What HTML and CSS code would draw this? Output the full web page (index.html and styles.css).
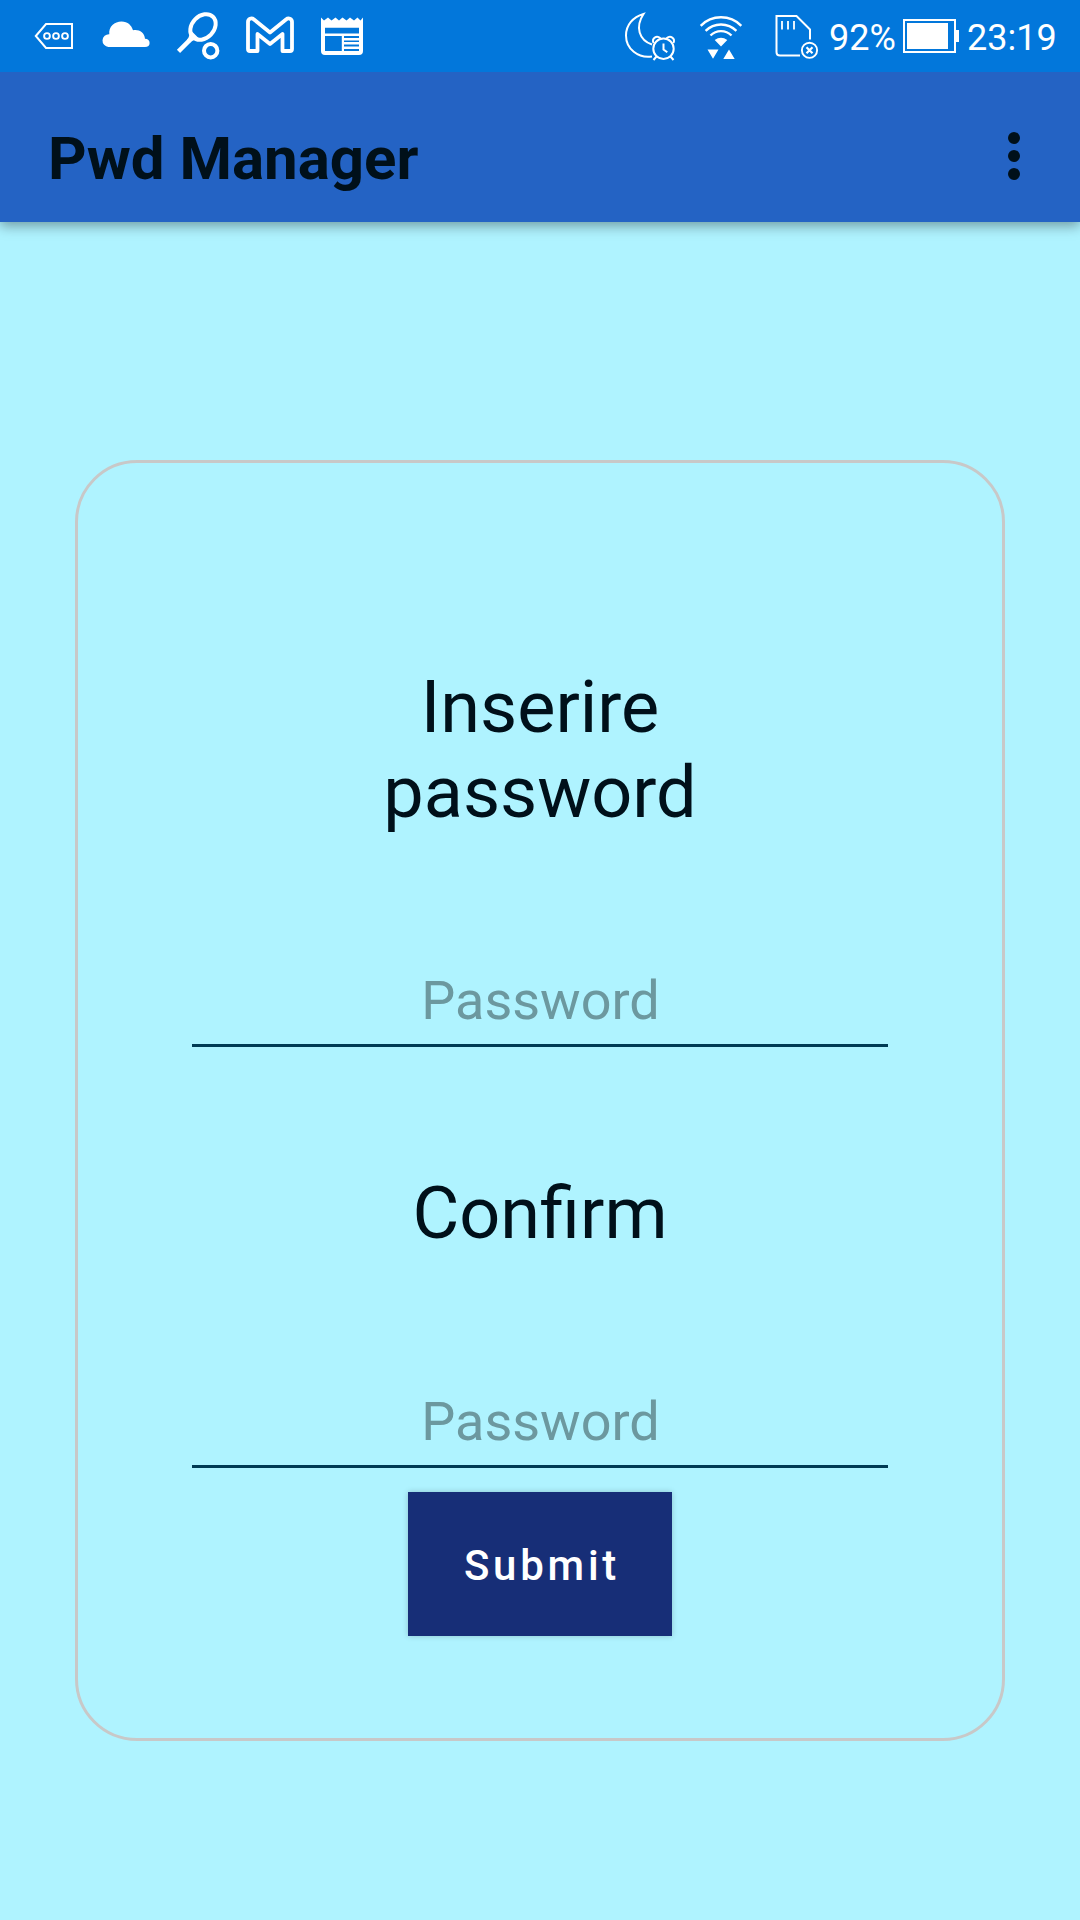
FILE: index.html
```html
<!DOCTYPE html>
<html lang="it">
<head>
<meta charset="utf-8">
<title>Pwd Manager</title>
<link rel="stylesheet" href="styles.css">
</head>
<body>
<div class="screen">
  <div class="status-bar">
    <div class="status-group">
      <svg class="status-icon" width="90" height="72" viewBox="0 0 90 72">
        <path d="M35.8 36 46 24H72V48H46Z" stroke-width="2"/>
        <g stroke-width="1.9"><circle cx="47" cy="36" r="2.9"/><circle cx="56" cy="36" r="2.9"/><circle cx="65" cy="36" r="2.9"/></g>
      </svg>
      <svg class="status-icon" width="70" height="72" viewBox="90 0 70 72">
        <path class="solid" d="M108.500 47A6.300 6.300 0 0 1 109.300 34.200C108.500 26.500 114.500 21.500 121.500 21.500C128 21.500 131.500 25.500 133 30.200C139 29 144.500 32.500 145 38.700C148 38.700 149.600 40.500 149.600 43S148 47 145 47Z"/>
      </svg>
      <svg class="status-icon" width="75" height="72" viewBox="160 0 75 72">
        <ellipse cx="203" cy="27" rx="14.300" ry="11" transform="rotate(-46 203 27)" stroke-width="4"/>
        <path d="M178.500 51.300 190 39.800" stroke-width="4.500"/>
        <path class="solid" d="M187 39.500Q190.500 36 189.500 29L200 39.500Q193.500 39 190.300 42.500Z"/>
        <circle cx="210.700" cy="50.700" r="6.700" stroke-width="4"/>
      </svg>
      <svg class="status-icon" width="70" height="72" viewBox="235 0 70 72">
        <path d="M248 22V49Q248 51 250 51H257.500V34L270 44 282.500 34V51H290Q292 51 292 49V22C292 18.500 288.500 17.500 286 19.500L270 32.500 254 19.500C251.500 17.500 248 18.500 248 22Z" stroke-width="3.800" stroke-linejoin="round"/>
      </svg>
      <svg class="status-icon" width="75" height="72" viewBox="305 0 75 72">
        <path class="solid" fill-rule="evenodd" d="M321 17.500 324 20.500 328 17.500 331.500 20.500 335.500 17.500 339 20.500 342.500 17.500 346.500 20.500 350 17.500 354 20.500 357.500 17.500 360.500 20.500 363 17.500V51Q363 55 359 55H325Q321 55 321 51ZM325 27.700V33.500H359V27.700ZM325 36V51H341.800V36ZM344 36V38H359V36ZM344 40.500V42H359V40.500ZM344 44.500V46.500H359V44.500ZM344 49V51H359V49Z"/>
      </svg>
    </div>
    <div class="status-group">
      <svg class="status-icon" width="75" height="72" viewBox="610 0 75 72">
        <path d="M652 56.500C638 58.500 626 49 626 35.500C626 25 633 17 643.500 14C635 27 639 40 652 44.500" stroke-width="2"/>
        <circle cx="663.500" cy="48.700" r="10.200" stroke-width="2"/>
        <path d="M653.500 43C651.500 38 656.500 35 660.500 38.300M673.500 43C675.500 38 670.500 35 666.500 38.300M656.500 56.500 653.500 60M670.500 56.500 673.500 60M663.500 43.500V49.500L667.300 52.300" stroke-width="2"/>
      </svg>
      <svg class="status-icon" width="75" height="72" viewBox="685 0 75 72">
        <path d="M700.700 25.800A28.500 28.500 0 0 1 741.300 25.800M705.600 30.800A21.800 21.800 0 0 1 736.400 30.800M710.500 35.500A14.800 14.800 0 0 1 731.500 35.500" stroke-width="2.400"/>
        <path class="solid" d="M714.700 40Q721 35.500 727.300 40L721 46.500ZM707.500 49.500H718.500L713 58.800ZM729 49.500 734.700 59H723.300Z"/>
      </svg>
      <svg class="status-icon" width="69" height="72" viewBox="760 0 69 72">
        <path d="M800 55.500H780Q776.500 55.500 776.500 52V16H796.500L810 29.500V39.500" stroke-width="2"/>
        <path d="M782 21V29.500M788 21V29.500M794 21V29.500" stroke-width="1.800"/>
        <circle cx="809.500" cy="50.300" r="7.600" stroke-width="1.900"/>
        <path d="M806.500 47.300 812.500 53.300M812.500 47.300 806.500 53.300" stroke-width="2.200"/>
      </svg>
      <span class="battery-level">92%</span>
      <svg class="status-icon" width="60" height="72" viewBox="901 0 60 72">
        <rect x="904" y="20" width="51" height="32" stroke-width="2"/>
        <path class="solid" d="M907 23H948V49H907ZM956 30H959V42H956Z"/>
      </svg>
      <span class="clock">23:19</span>
    </div>
  </div>
  <header class="app-bar">
    <h1 class="app-title">Pwd Manager</h1>
    <button class="menu-button" type="button" aria-label="Menu">
      <span class="dot"></span><span class="dot"></span><span class="dot"></span>
    </button>
  </header>
  <main class="content">
    <form class="card">
      <h2 class="label">Inserire<br>password</h2>
      <input class="field" type="password" placeholder="Password">
      <h2 class="label label-confirm">Confirm</h2>
      <input class="field" type="password" placeholder="Password">
      <button class="submit" type="button">Submit</button>
    </form>
  </main>
</div>
</body>
</html>
```

FILE: styles.css
```css
* {
  box-sizing: border-box;
}

body {
  margin: 0;
  font-family: Roboto, "Liberation Sans", sans-serif;
  color: #00101a;
}

.screen {
  display: flex;
  flex-direction: column;
  width: 1080px;
  height: 1920px;
  overflow: hidden;
  background: #aff3ff;
}

.status-bar {
  position: relative;
  z-index: 1;
  display: flex;
  justify-content: space-between;
  height: 72px;
  padding-right: 24px;
  background: #0277db;
  color: #fff;
  font-size: 36px;
  line-height: 76px;
}

.status-group {
  display: flex;
}

.status-icon {
  display: block;
  flex: none;
  fill: none;
  stroke: #fff;
}

.status-icon .solid {
  fill: #fff;
  stroke: none;
}

.battery-level {
  width: 72px;
}

.clock {
  width: 95px;
  padding-left: 6px;
}

.app-bar {
  display: flex;
  align-items: center;
  justify-content: space-between;
  height: 150px;
  padding: 18px 54px 0 48px;
  background: #2463c4;
  box-shadow: 0 4px 12px rgba(0, 0, 0, 0.36);
}

.app-title {
  margin: 0;
  padding-top: 5px;
  font-size: 60px;
  font-weight: 700;
  line-height: 70px;
}

.menu-button {
  display: flex;
  flex-direction: column;
  align-items: center;
  gap: 6px;
  width: 24px;
  padding: 0;
  border: 0;
  background: none;
}

.dot {
  width: 12px;
  height: 12px;
  border-radius: 50%;
  background: #00101a;
}

.content {
  padding: 238px 75px 0;
}

.card {
  display: flex;
  flex-direction: column;
  align-items: center;
  height: 1281px;
  padding-top: 202px;
  border: 3px solid #c8c8c8;
  border-radius: 62px;
}

.label {
  margin: 0;
  font-size: 72px;
  font-weight: 400;
  line-height: 85px;
  text-align: center;
}

.label-confirm {
  margin-top: 124px;
}

.field {
  width: 696px;
  height: 78px;
  margin-top: 134px;
  padding: 0 0 12px 1px;
  border: 0;
  border-bottom: 3px solid #003a54;
  border-radius: 0;
  background: none;
  font: 54px/63px Roboto, "Liberation Sans", sans-serif;
  text-align: center;
}

.field::placeholder {
  color: #6c989f;
  opacity: 1;
}

.submit {
  width: 264px;
  height: 144px;
  margin-top: 24px;
  padding: 3px 0 0 4px;
  border: 0;
  background: #172e77;
  box-shadow: 0 0 6px rgba(0, 0, 0, 0.2);
  color: #fff;
  font: 500 42px/49px Roboto, "Liberation Sans", sans-serif;
  letter-spacing: 3.75px;
}
```
